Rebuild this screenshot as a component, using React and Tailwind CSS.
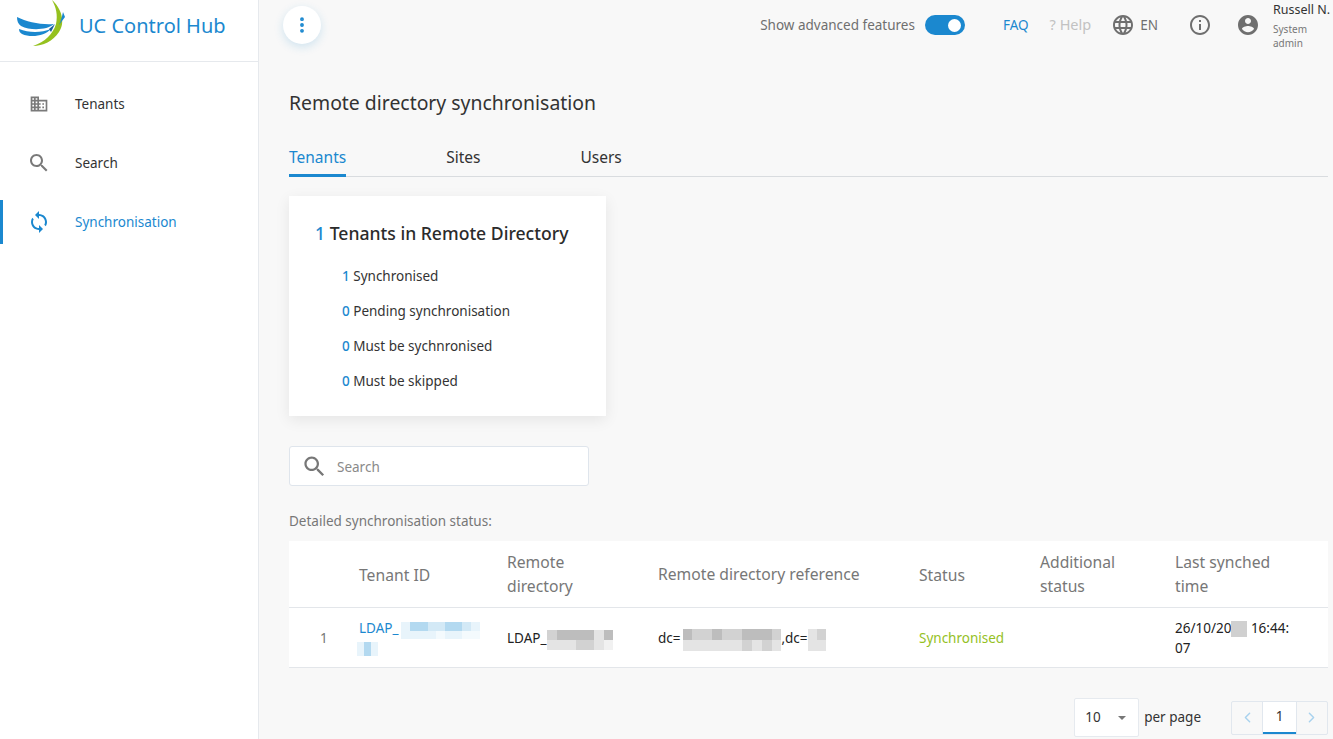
import React from 'react';
import { EllipsisVertical, ChevronLeft, ChevronRight } from 'lucide-react';

const MaterialIcon = ({ d, size = 24, className = '' }) => (
    <svg width={size} height={size} viewBox="0 0 24 24" fill="currentColor" className={`shrink-0 ${className}`}>
        <path d={d} />
    </svg>
);

const icons = {
    domain: 'M12 7V3H2v18h20V7H12zM6 19H4v-2h2v2zm0-4H4v-2h2v2zm0-4H4V9h2v2zm0-4H4V5h2v2zm4 12H8v-2h2v2zm0-4H8v-2h2v2zm0-4H8V9h2v2zm0-4H8V5h2v2zm10 12h-8v-2h2v-2h-2v-2h2v-2h-2V9h8v10zm-2-8h-2v2h2v-2zm0 4h-2v2h2v-2z',
    search: 'M15.5 14h-.79l-.28-.27C15.41 12.59 16 11.11 16 9.5 16 5.91 13.09 3 9.5 3S3 5.91 3 9.5 5.91 16 9.5 16c1.61 0 3.09-.59 4.23-1.57l.27.28v.79l5 4.99L20.49 19l-4.99-5zm-6 0C7.01 14 5 11.99 5 9.5S7.01 5 9.5 5 14 7.01 14 9.5 11.99 14 9.5 14z',
    sync: 'M12 4V1L8 5l4 4V6c3.31 0 6 2.69 6 6 0 1.01-.25 1.97-.7 2.8l1.46 1.46C19.54 15.03 20 13.57 20 12c0-4.42-3.58-8-8-8zm0 14c-3.31 0-6-2.69-6-6 0-1.01.25-1.97.7-2.8L5.24 7.74C4.46 8.97 4 10.43 4 12c0 4.42 3.58 8 8 8v3l4-4-4-4v3z',
    account: 'M12 2C6.48 2 2 6.48 2 12s4.48 10 10 10 10-4.48 10-10S17.52 2 12 2zm0 3c1.66 0 3 1.34 3 3s-1.34 3-3 3-3-1.34-3-3 1.34-3 3-3zm0 14.2c-2.5 0-4.71-1.28-6-3.22.03-1.99 4-3.08 6-3.08 1.99 0 5.97 1.09 6 3.08-1.29 1.94-3.5 3.22-6 3.22z',
    info: 'M11 7h2v2h-2zm0 4h2v6h-2zm1-9C6.48 2 2 6.48 2 12s4.48 10 10 10 10-4.48 10-10S17.52 2 12 2zm0 18c-4.41 0-8-3.59-8-8s3.59-8 8-8 8 3.59 8 8-3.59 8-8 8z',
    language: 'M11.99 2C6.47 2 2 6.48 2 12s4.47 10 9.99 10C17.52 22 22 17.52 22 12S17.52 2 11.99 2zm6.93 6h-2.95c-.32-1.25-.78-2.45-1.38-3.56 1.84.63 3.37 1.91 4.33 3.56zM12 4.04c.83 1.2 1.48 2.53 1.91 3.96h-3.82c.43-1.43 1.08-2.76 1.91-3.96zM4.26 14C4.1 13.36 4 12.69 4 12s.1-1.36.26-2h3.38c-.08.66-.14 1.32-.14 2 0 .68.06 1.34.14 2H4.26zm.82 2h2.95c.32 1.25.78 2.45 1.38 3.56-1.84-.63-3.37-1.9-4.33-3.56zm2.95-8H5.08c.96-1.66 2.49-2.93 4.33-3.56C8.81 5.55 8.35 6.75 8.03 8zM12 19.96c-.83-1.2-1.48-2.53-1.91-3.96h3.82c-.43 1.43-1.08 2.76-1.91 3.96zM14.34 14H9.66c-.09-.66-.16-1.32-.16-2 0-.68.07-1.35.16-2h4.68c.09.65.16 1.32.16 2 0 .68-.07 1.34-.16 2zm.25 5.56c.6-1.11 1.06-2.31 1.38-3.56h2.95c-.96 1.65-2.49 2.93-4.33 3.56zM16.36 14c.08-.66.14-1.32.14-2 0-.68-.06-1.34-.14-2h3.38c.16.64.26 1.31.26 2s-.1 1.36-.26 2h-3.38z',
};

const Logo = () => (
    <svg width="50" height="48" viewBox="0 0 50 48" className="shrink-0 self-start">
        <path d="M0 17 C10 22 24 25 37 24 C30 30 14 31 4 26 C1 24 0 21 0 17 Z" fill="#1b88cf" />
        <path d="M2 29 C12 33 24 33 34 29 C28 36 14 38 5 34 C3 33 2 31 2 29 Z" fill="#1b88cf" />
        <path d="M32 29 L38 24 L34 32 Z" fill="#1a5f9c" />
        <path d="M35 0 C44 8 49 22 42 32 C36 41 26 46 16 46 C28 42 36 34 39 24 C41 15 39 7 35 0 Z" fill="#95c11f" />
        <path d="M46 12 L48 17 L42 25 C44 21 45 16 46 12 Z" fill="#1b88cf" />
    </svg>
);

const Mosaic = ({ rows, cell = 10, cellH, className = '' }) => (
    <span className={`inline-flex flex-col align-middle ${className}`}>
        {rows.map((row, i) => (
            <span key={i} className="flex">
                {row.map((c, j) => (
                    <span key={j} style={{ width: cell, height: cellH || cell, background: c }} />
                ))}
            </span>
        ))}
    </span>
);

const NavItem = ({ icon, size, label, active }) => (
    <div className={`flex h-[44px] items-center border-l-[3px] pl-[24px] ${active ? 'border-[#1b88cf] text-[#1b88cf]' : 'border-transparent text-[#333333]'}`}>
        <span className={`flex w-[24px] justify-center ${active ? 'text-[#1b88cf]' : 'text-[#7a7a7a]'}`}>
            <MaterialIcon d={icon} size={size} />
        </span>
        <span className="ml-[24px] text-[13.5px]">{label}</span>
    </div>
);

const Sidebar = () => (
    <aside className="flex w-[259px] shrink-0 flex-col border-r border-[#e6e9ed] bg-white">
        <div className="flex h-[62px] items-center border-b border-[#e6e9ed] pl-[17px]">
            <Logo />
            <span className="-mt-[9px] ml-[12px] text-[20px] text-[#1b88cf]">UC Control Hub</span>
        </div>
        <nav className="flex flex-col gap-[15px] pt-[20px]">
            <NavItem icon={icons.domain} size={20} label="Tenants" />
            <NavItem icon={icons.search} label="Search" />
            <NavItem icon={icons.sync} label="Synchronisation" active />
        </nav>
    </aside>
);

const Header = () => (
    <header className="flex h-[50px] items-center pl-[24px] text-[13.5px]">
        <button className="flex h-[38px] w-[38px] items-center justify-center rounded-full bg-white text-[#1b88cf] shadow-[0_3px_10px_rgba(27,136,207,0.18)]">
            <EllipsisVertical size={20} strokeWidth={2.6} />
        </button>
        <div className="ml-auto flex items-center">
            <span className="text-[#6f6f6f]">Show advanced features</span>
            <span className="ml-[10px] flex h-[20px] w-[40px] items-center justify-end rounded-full bg-[#1b88cf] pr-[4px]">
                <span className="h-[13px] w-[13px] rounded-full bg-white" />
            </span>
            <span className="ml-[38px] text-[#1b88cf]">FAQ</span>
            <span className="ml-[21px] text-[14.5px] text-[#c2c2c2]">? Help</span>
            <MaterialIcon d={icons.language} className="ml-[20px] text-[#6f6f6f]" />
            <span className="ml-[5px] text-[#6f6f6f]">EN</span>
            <MaterialIcon d={icons.info} className="ml-[30px] text-[#6f6f6f]" />
            <MaterialIcon d={icons.account} className="ml-[24px] text-[#6f6f6f]" />
            <div className="ml-[13px] flex w-[60px] flex-col self-start">
                <span className="whitespace-nowrap text-[12.5px] leading-[18px] text-[#333333]">Russell N.</span>
                <span className="mt-[3px] w-[40px] text-[10px] leading-[14px] text-[#777777]">System admin</span>
            </div>
        </div>
    </header>
);

const tabs = ['Tenants', 'Sites', 'Users'];

const Tabs = () => (
    <div className="mt-[23px] flex h-[38px] gap-[100px] border-b border-[#d9dcdf] text-[15.5px]">
        {tabs.map((t, i) => (
            <div key={t} className={`h-[38px] pt-[7px] ${i === 0 ? 'border-b-[3px] border-[#1b88cf] text-[#1b88cf]' : 'text-[#333333]'}`}>{t}</div>
        ))}
    </div>
);

const summary = [
    ['1', 'Synchronised'],
    ['0', 'Pending synchronisation'],
    ['0', 'Must be sychnronised'],
    ['0', 'Must be skipped'],
];

const SummaryCard = () => (
    <div className="mt-[19px] h-[220px] w-[317px] bg-white pl-[26px] pt-[25px] shadow-[0_4px_14px_rgba(0,0,0,0.08)]">
        <div className="text-[17.6px] font-medium leading-[24px] text-[#2b2b2b]">
            <span className="text-[#1b88cf]">1</span> Tenants in Remote Directory
        </div>
        <div className="mt-[21px] flex flex-col gap-[15px] pl-[27px] text-[13.5px] leading-[20px] text-[#333333]">
            {summary.map(([n, label]) => (
                <div key={label}><span className="font-medium text-[#1b88cf]">{n}</span> {label}</div>
            ))}
        </div>
    </div>
);

const SearchBox = () => (
    <div className="mt-[30px] flex h-[40px] w-[300px] items-center rounded-[3px] border border-[#dfe5ec] bg-white pl-[11px]">
        <MaterialIcon d={icons.search} size={27} className="text-[#777777]" />
        <span className="ml-[9px] pt-[2px] text-[13.5px] text-[#8a8a8a]">Search</span>
    </div>
);

const G1 = '#bdbdbd', G2 = '#d2d2d2', G3 = '#e4e4e4', G4 = '#f1f1f1';
const B1 = '#b3d9f0', B2 = '#d3e9f6', B3 = '#e8f4fb', B4 = '#f4fafd';

const gridCols = 'grid grid-cols-[70px_148px_151px_261px_121px_135px_1fr]';

const Table = () => (
    <div className="mt-[11px] bg-white">
        <div className={`${gridCols} h-[67px] items-center border-b border-[#e3e6ea] text-[15.7px] leading-[24px] text-[#777777]`}>
            <span />
            <span className="pt-[1px]">Tenant ID</span>
            <span className="w-[90px]">Remote directory</span>
            <span>Remote directory reference</span>
            <span className="pt-[1px]">Status</span>
            <span className="w-[90px]">Additional status</span>
            <span className="w-[110px]">Last synched time</span>
        </div>
        <div className={`${gridCols} h-[60px] items-center border-b border-[#e3e6ea] text-[13.5px] leading-[20px] text-[#222222]`}>
            <span className="pl-[31px] text-[#777777]">1</span>
            <div className="text-[#1b88cf]">
                <div className="flex h-[20px] items-center">
                    LDAP_
                    <Mosaic cell={8.7} className="ml-[3px] translate-y-[3px]" rows={[[B3, B1, B1, B2, B2, B1, B1, B2, B3], [B3, B3, B3, B3, B4, B3, B3, B4, B4]]} />
                </div>
                <Mosaic cell={7} className="-ml-[2px] mt-[1px]" rows={[[B3, B1, B3], [B3, B1, B3]]} />
            </div>
            <div className="flex items-center">
                LDAP_
                <Mosaic cell={9.4} cellH={10} className="ml-[1px] translate-y-[2px]" rows={[[G2, G1, G1, G1, G1, G3, G1], [G3, G3, G3, G2, G2, G3, G4]]} />
            </div>
            <div className="flex items-center">
                dc=
                <Mosaic cell={9.9} cellH={11} className="ml-[2px] translate-y-[2px]" rows={[[G1, G2, G2, G1, G2, G2, G1, G1, G1, G2], [G3, G3, G3, G3, G3, G3, G2, G3, G2, G3]]} />
                ,dc=
                <Mosaic cell={9} cellH={11} className="translate-y-[2px]" rows={[[G3, G2], [G3, G3]]} />
            </div>
            <span className="text-[#95c11f]">Synchronised</span>
            <span />
            <div className="w-[125px]">
                26/10/20<span className="inline-block h-[16px] w-[16px] bg-[#d0d0d0] align-middle" /> 16:44: 07
            </div>
        </div>
    </div>
);

const Pagination = () => (
    <div className="mt-[30px] flex items-center justify-end text-[13.5px] text-[#333333]">
        <div className="flex h-[39px] w-[65px] items-center justify-between rounded-[2px] border border-[#e6eaef] bg-white pl-[10px] pr-[12px]">
            <span>10</span>
            <span className="h-0 w-0 border-x-[4px] border-t-[4px] border-x-transparent border-t-[#777777]" />
        </div>
        <span className="ml-[5px]">per page</span>
        <div className="ml-[30px] flex h-[34px] w-[97px] rounded-[2px] border border-[#e1e7ee]">
            <span className="flex w-[32px] items-center justify-center border-r border-[#e1e7ee]"><ChevronLeft size={17} className="text-[#a8d2ee]" /></span>
            <span className="flex w-[33px] items-center justify-center border-b-2 border-b-[#1b88cf] bg-white">1</span>
            <span className="flex w-[32px] items-center justify-center border-l border-[#e1e7ee]"><ChevronRight size={17} className="text-[#a8d2ee]" /></span>
        </div>
    </div>
);

export default function App() {
    return (
        <div className="flex h-[739px] overflow-hidden bg-[#f8f8f8] font-['Noto_Sans',sans-serif]">
            <Sidebar />
            <main className="min-w-0 flex-1 overflow-hidden">
                <Header />
                <div className="pl-[30px] pr-[5px]">
                    <h1 className="mt-[40px] text-[19.4px] leading-[26px] text-[#333333]">Remote directory synchronisation</h1>
                    <Tabs />
                    <SummaryCard />
                    <SearchBox />
                    <p className="mt-[27px] text-[13.5px] leading-[17px] text-[#777777]">Detailed synchronisation status:</p>
                    <Table />
                    <Pagination />
                </div>
            </main>
        </div>
    );
}
